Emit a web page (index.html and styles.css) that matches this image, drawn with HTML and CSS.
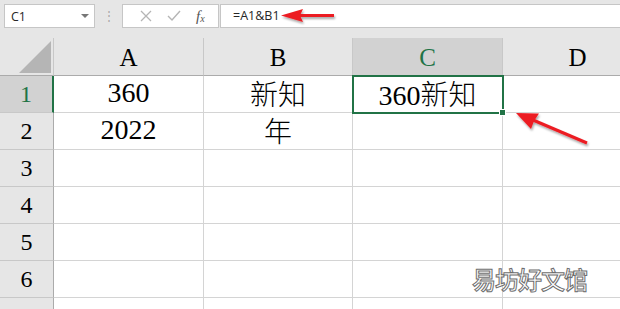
FILE: index.html
```html
<!DOCTYPE html>
<html lang="zh-CN">
<head>
    <meta charset="UTF-8">
    <title>Sheet</title>
    <link rel="stylesheet" href="styles.css">
</head>
<body>
    <div class="app">
        <div class="toolbar">
            <div class="namebox">
                <span>C1</span>
                <span class="caret"></span>
            </div>
            <div class="grip">&#8942;</div>
            <div class="fxbtns">
                <svg width="12" height="12" viewBox="0 0 12 12"><path d="M1 1 L11 11 M11 1 L1 11" stroke="#b5b5b5" stroke-width="1.3" fill="none"/></svg>
                <svg width="14" height="12" viewBox="0 0 14 12"><path d="M1 6 L5 10 L13 1" stroke="#b5b5b5" stroke-width="1.4" fill="none"/></svg>
                <span class="fx">f<sub>x</sub></span>
            </div>
            <div class="formula">=A1&amp;B1</div>
        </div>

        <div class="sheet">
            <div class="hd corner"><span class="tri"></span></div>
            <div class="hd col">A</div>
            <div class="hd col">B</div>
            <div class="hd col active">C</div>
            <div class="hd col">D</div>

            <div class="hd row active">1</div>
            <div class="cell">360</div>
            <div class="cell">新知</div>
            <div class="cell selected">360新知</div>
            <div class="cell"></div>

            <div class="hd row">2</div>
            <div class="cell">2022</div>
            <div class="cell">年</div>
            <div class="cell"></div>
            <div class="cell"></div>

            <div class="hd row">3</div>
            <div class="cell"></div><div class="cell"></div><div class="cell"></div><div class="cell"></div>
            <div class="hd row">4</div>
            <div class="cell"></div><div class="cell"></div><div class="cell"></div><div class="cell"></div>
            <div class="hd row">5</div>
            <div class="cell"></div><div class="cell"></div><div class="cell"></div><div class="cell"></div>
            <div class="hd row">6</div>
            <div class="cell"></div><div class="cell"></div><div class="cell"></div><div class="cell"></div>
            <div class="hd row"></div>
            <div class="cell"></div><div class="cell"></div><div class="cell"></div><div class="cell"></div>
        </div>

        <!-- annotation arrows drawn over the screenshot -->
        <svg class="arrows" width="620" height="309" viewBox="0 0 620 309">
            <defs>
                <filter id="sh" x="-20%" y="-50%" width="140%" height="200%">
                    <feDropShadow dx="1" dy="2" stdDeviation="1.2" flood-color="#000" flood-opacity="0.35"/>
                </filter>
            </defs>
            <g filter="url(#sh)" fill="#ec1c24" stroke="#ec1c24">
                <line x1="298" y1="15.5" x2="334" y2="15.5" stroke-width="3"/>
                <polygon points="281,15.5 303,9 300,15.5 303,22" stroke="none"/>
                <line x1="533" y1="120" x2="587" y2="143" stroke-width="3"/>
                <polygon points="516,113 539,113.5 534,121 531,129" stroke="none"/>
            </g>
        </svg>

        <div class="watermark">易坊好文馆</div>
    </div>
</body>
</html>
```

FILE: styles.css
```css
body {
    margin: 0;
    padding: 0;
    background-color: #fff;
}
.app {
    position: relative;
    width: 620px;
    height: 309px;
    overflow: hidden;
}
.toolbar {
    height: 38px;
    box-sizing: border-box;
    padding: 4px 0 0 4px;
    background-color: #e6e6e6;
    display: flex;
    align-items: flex-start;
    font-family: 'Open Sans', 'Liberation Sans', sans-serif;
    font-size: 12.5px;
    color: #262626;
}
.namebox {
    width: 91px;
    height: 24px;
    box-sizing: border-box;
    border: 1px solid #c6c6c6;
    background-color: #fff;
    display: flex;
    align-items: center;
    justify-content: space-between;
    padding: 0 5px 0 6px;
}
.caret {
    width: 0;
    height: 0;
    border-left: 4px solid transparent;
    border-right: 4px solid transparent;
    border-top: 4px solid #777;
}
.grip {
    width: 27px;
    height: 24px;
    line-height: 24px;
    text-align: center;
    color: #aaa;
    font-size: 12px;
}
.fxbtns {
    width: 97px;
    height: 24px;
    box-sizing: border-box;
    border: 1px solid #c6c6c6;
    background-color: #fff;
    display: flex;
    align-items: center;
    justify-content: space-around;
    padding: 0 6px 0 10px;
}
.fx {
    font-family: 'Liberation Serif', serif;
    font-style: italic;
    font-size: 15px;
    color: #555;
}
.fx sub {
    font-size: 10px;
    vertical-align: -1px;
}
.formula {
    flex: 1;
    height: 24px;
    box-sizing: border-box;
    margin-left: 1px;
    border: 1px solid #c6c6c6;
    border-right: none;
    background-color: #fff;
    padding-left: 12px;
    line-height: 22px;
}
.sheet {
    display: grid;
    grid-template-columns: 54px 150px 149px 150px 150px;
    grid-template-rows: 38px repeat(7, 37px);
    font-family: 'Liberation Serif', 'Noto Sans CJK SC', serif;
    color: #000;
}
.sheet > div {
    box-sizing: border-box;
    border-right: 1px solid #d4d4d4;
    border-bottom: 1px solid #d4d4d4;
    display: flex;
    align-items: center;
    justify-content: center;
}
.hd {
    background-color: #e6e6e6;
    font-size: 25px;
}
.sheet > .col {
    border-right-color: #c8c8c8;
    border-bottom-color: #ababab;
    padding-top: 2px;
}
.sheet > .row {
    border-right-color: #ababab;
    border-bottom-color: #c8c8c8;
    font-size: 24px;
}
.sheet > .corner {
    border-right-color: #c8c8c8;
    border-bottom-color: #ababab;
    position: relative;
}
.tri {
    position: absolute;
    right: 2px;
    bottom: 2px;
    width: 32px;
    height: 32px;
    background-color: #b5b5b5;
    clip-path: polygon(100% 0, 100% 100%, 0 100%);
}
.sheet > .active {
    background-color: #d2d2d2;
    color: #217346;
}
.sheet > .row.active {
    border-right: 2px solid #217346;
}
.cell {
    font-size: 28px;
    font-weight: 300;
    padding-bottom: 3px;
}
.sheet > .selected {
    position: relative;
    outline: 2px solid #217346;
    outline-offset: -1px;
    border-color: transparent;
}
.selected::after {
    content: '';
    position: absolute;
    right: -4px;
    bottom: -4px;
    width: 5px;
    height: 5px;
    background-color: #217346;
    border: 1px solid #fff;
}
.arrows {
    position: absolute;
    left: 0;
    top: 0;
    pointer-events: none;
}
.watermark {
    position: absolute;
    left: 472px;
    top: 261px;
    font-family: 'Noto Sans CJK SC', sans-serif;
    font-size: 24px;
    font-weight: 500;
    letter-spacing: -1px;
    color: #fff;
    -webkit-text-stroke: 1px #6e6e6e;
}
```
